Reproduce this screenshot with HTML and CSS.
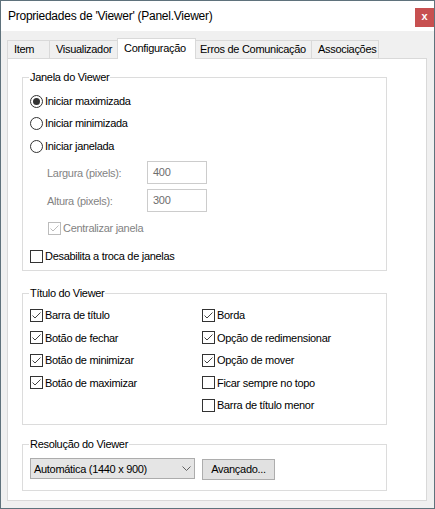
FILE: index.html
```html
<!DOCTYPE html>
<html lang="pt">
<head>
<meta charset="utf-8">
<title>Propriedades de 'Viewer'</title>
<link rel="stylesheet" href="styles.css">
</head>
<body>
<div class="window">
  <div class="titlebar">
    <span class="title">Propriedades de 'Viewer' (Panel.Viewer)</span>
    <span class="close">x</span>
  </div>
  <div class="body">
    <div class="tabs">
      <div class="tab w-item">Item</div>
      <div class="tab w-vis">Visualizador</div>
      <div class="tab active w-conf">Configuração</div>
      <div class="tab w-erros">Erros de Comunicação</div>
      <div class="tab w-assoc">Associações</div>
    </div>
    <div class="panel">
      <div class="group g1">
        <div class="legend">Janela do Viewer</div>
        <div class="choice mt9"><svg class="mark" viewBox="0 0 13 13"><circle cx="6.5" cy="6.5" r="6" fill="#fff" stroke="#333"/><circle cx="6.5" cy="6.5" r="3.5" fill="#333"/></svg><span>Iniciar maximizada</span></div>
        <div class="choice mt6"><svg class="mark" viewBox="0 0 13 13"><circle cx="6.5" cy="6.5" r="6" fill="#fff" stroke="#333"/></svg><span>Iniciar minimizada</span></div>
        <div class="choice mt7"><svg class="mark" viewBox="0 0 13 13"><circle cx="6.5" cy="6.5" r="6" fill="#fff" stroke="#333"/></svg><span>Iniciar janelada</span></div>
        <div class="field mt7"><span class="flabel">Largura (pixels):</span><span class="input">400</span></div>
        <div class="field mt5"><span class="flabel">Altura (pixels):</span><span class="input">300</span></div>
        <div class="choice disabled indent mt8"><svg class="mark" viewBox="0 0 13 13"><rect x="0.5" y="0.5" width="12" height="12" fill="#fff" stroke="#bcbcbc"/><path d="M2.5 6.5 L5 9 L10.5 3.5" fill="none" stroke="#bcbcbc"/></svg><span>Centralizar janela</span></div>
        <div class="choice mt12"><svg class="mark" viewBox="0 0 13 13"><rect x="0.5" y="0.5" width="12" height="12" fill="#fff" stroke="#333"/></svg><span>Desabilita a troca de janelas</span></div>
      </div>

      <div class="group g2">
        <div class="legend">Título do Viewer</div>
        <div class="grid">
          <div class="choice"><svg class="mark" viewBox="0 0 13 13"><rect x="0.5" y="0.5" width="12" height="12" fill="#fff" stroke="#333"/><path d="M2.5 6.5 L5 9 L10.5 3.5" fill="none" stroke="#444"/></svg><span>Barra de título</span></div>
          <div class="choice"><svg class="mark" viewBox="0 0 13 13"><rect x="0.5" y="0.5" width="12" height="12" fill="#fff" stroke="#333"/><path d="M2.5 6.5 L5 9 L10.5 3.5" fill="none" stroke="#444"/></svg><span>Borda</span></div>
          <div class="choice"><svg class="mark" viewBox="0 0 13 13"><rect x="0.5" y="0.5" width="12" height="12" fill="#fff" stroke="#333"/><path d="M2.5 6.5 L5 9 L10.5 3.5" fill="none" stroke="#444"/></svg><span>Botão de fechar</span></div>
          <div class="choice"><svg class="mark" viewBox="0 0 13 13"><rect x="0.5" y="0.5" width="12" height="12" fill="#fff" stroke="#333"/><path d="M2.5 6.5 L5 9 L10.5 3.5" fill="none" stroke="#444"/></svg><span>Opção de redimensionar</span></div>
          <div class="choice"><svg class="mark" viewBox="0 0 13 13"><rect x="0.5" y="0.5" width="12" height="12" fill="#fff" stroke="#333"/><path d="M2.5 6.5 L5 9 L10.5 3.5" fill="none" stroke="#444"/></svg><span>Botão de minimizar</span></div>
          <div class="choice"><svg class="mark" viewBox="0 0 13 13"><rect x="0.5" y="0.5" width="12" height="12" fill="#fff" stroke="#333"/><path d="M2.5 6.5 L5 9 L10.5 3.5" fill="none" stroke="#444"/></svg><span>Opção de mover</span></div>
          <div class="choice"><svg class="mark" viewBox="0 0 13 13"><rect x="0.5" y="0.5" width="12" height="12" fill="#fff" stroke="#333"/><path d="M2.5 6.5 L5 9 L10.5 3.5" fill="none" stroke="#444"/></svg><span>Botão de maximizar</span></div>
          <div class="choice"><svg class="mark" viewBox="0 0 13 13"><rect x="0.5" y="0.5" width="12" height="12" fill="#fff" stroke="#333"/></svg><span>Ficar sempre no topo</span></div>
          <div class="choice col2"><svg class="mark" viewBox="0 0 13 13"><rect x="0.5" y="0.5" width="12" height="12" fill="#fff" stroke="#333"/></svg><span>Barra de título menor</span></div>
        </div>
      </div>

      <div class="group g3">
        <div class="legend">Resolução do Viewer</div>
        <div class="resrow">
          <div class="select"><span>Automática (1440 x 900)</span><svg class="chev" viewBox="0 0 9 5"><path d="M0.5 0.5 L4.5 4.5 L8.5 0.5" fill="none" stroke="#606060"/></svg></div>
          <div class="button">Avançado...</div>
        </div>
      </div>
    </div>
  </div>
</div>
</body>
</html>
```
FILE: styles.css
```css
* { box-sizing: border-box; }
html, body { margin: 0; padding: 0; }
body {
  font: 11px/14px "Liberation Sans", Arial, sans-serif;
  letter-spacing: -0.3px;
  color: #000;
  background: #fff;
}
.window {
  width: 435px;
  height: 509px;
  border: 1px solid #5f727c;
  display: flex;
  flex-direction: column;
  background: #f0f0f0;
}
.titlebar {
  height: 30px;
  background: #fff;
  display: flex;
  align-items: flex-start;
  justify-content: space-between;
  padding-left: 7px;
}
.title { font-size: 12px; line-height: 30px; letter-spacing: -0.25px; }
.close {
  width: 19px;
  height: 19px;
  margin-top: 7px;
  background: #c75050;
  color: #fff;
  font-weight: bold;
  font-size: 11px;
  line-height: 17px;
  letter-spacing: 0;
  text-align: center;
}
.body {
  flex: 1;
  display: flex;
  flex-direction: column;
  padding: 7px 7px 7px 6px;
}
.tabs { display: flex; align-items: flex-end; height: 20px; }
.tab {
  height: 18px;
  border: 1px solid #d9d9d9;
  border-bottom: 0;
  margin-right: -1px;
  padding-left: 6px;
  line-height: 17px;
  white-space: nowrap;
  background: #f0f0f0;
}
.tab.active {
  height: 21px;
  margin-bottom: -1px;
  background: #fff;
  position: relative;
  z-index: 1;
  line-height: 18px;
}
.w-item { width: 43px; }
.w-vis { width: 69px; }
.w-conf { width: 79px; }
.w-erros { width: 117px; padding-left: 4px; }
.w-assoc { width: 68px; }

.panel {
  flex: 1;
  background: #fff;
  border: 1px solid #d9d9d9;
  padding: 18px 39px 0 14px;
  display: flex;
  flex-direction: column;
}
.group {
  border: 1px solid #dcdcdc;
  padding: 0 7px;
  display: flex;
  flex-direction: column;
  align-items: flex-start;
}
.legend {
  align-self: flex-start;
  margin: -8px 0 0 -1px;
  padding: 0 1px;
  background: #fff;
  line-height: 14px;
}
.g1 { padding-bottom: 6px; }
.g2 { margin-top: 22px; padding-bottom: 7.5px; align-items: stretch; }
.g3 { margin-top: 19px; padding-bottom: 10px; }

.choice { display: flex; align-items: center; gap: 2px; height: 16px; white-space: nowrap; }
.mark { width: 13px; height: 13px; flex: none; display: block; }
.disabled { color: #838383; }
.indent { margin-left: 18px; }

.mt5 { margin-top: 5px; }
.mt6 { margin-top: 6px; }
.mt7 { margin-top: 7px; }
.mt8 { margin-top: 8px; }
.mt9 { margin-top: 9px; }
.mt12 { margin-top: 12px; }

.field {
  display: flex;
  align-items: center;
  height: 23px;
  padding-left: 17px;
  color: #838383;
}
.flabel { width: 100px; }
.input {
  width: 60px;
  height: 23px;
  border: 1px solid #cccccc;
  color: #6d6d6d;
  padding-left: 5px;
  line-height: 21px;
  background: #fff;
}

.grid {
  display: grid;
  grid-template-columns: 172px 1fr;
  grid-auto-rows: 22.5px;
  align-items: center;
  margin-top: 4px;
}
.col2 { grid-column: 2; }

.resrow { display: flex; align-items: flex-start; gap: 7px; margin-top: 7px; }
.select {
  width: 165px;
  height: 21px;
  border: 1px solid #acacac;
  background: #e5e5e5;
  display: flex;
  align-items: center;
  justify-content: space-between;
  padding: 0 3px 0 3px;
}
.chev { width: 9px; height: 5px; display: block; }
.button {
  width: 73px;
  height: 21px;
  margin-top: 1px;
  border: 1px solid #adadad;
  background: #e1e1e1;
  text-align: center;
  line-height: 19px;
}
```
